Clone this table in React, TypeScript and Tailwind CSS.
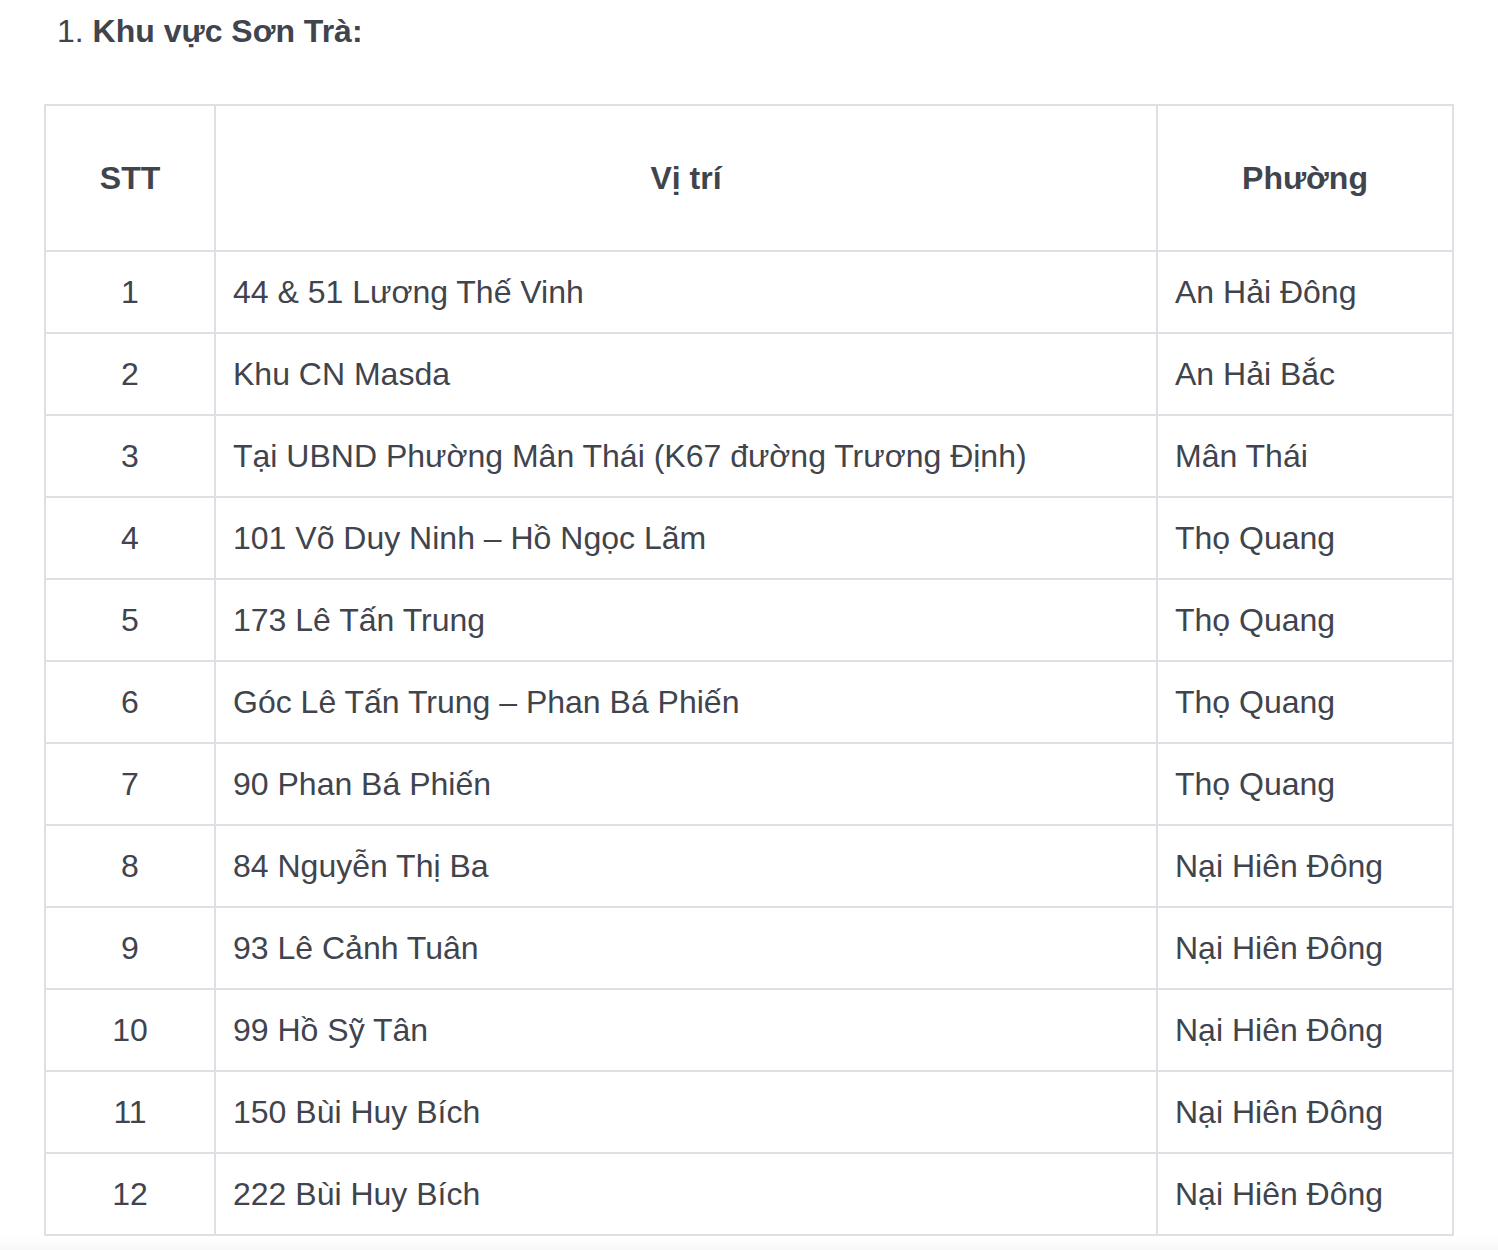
const rows: [string, string, string][] = [
  ['1', '44 & 51 Lương Thế Vinh', 'An Hải Đông'],
  ['2', 'Khu CN Masda', 'An Hải Bắc'],
  ['3', 'Tại UBND Phường Mân Thái (K67 đường Trương Định)', 'Mân Thái'],
  ['4', '101 Võ Duy Ninh – Hồ Ngọc Lãm', 'Thọ Quang'],
  ['5', '173 Lê Tấn Trung', 'Thọ Quang'],
  ['6', 'Góc Lê Tấn Trung – Phan Bá Phiến', 'Thọ Quang'],
  ['7', '90 Phan Bá Phiến', 'Thọ Quang'],
  ['8', '84 Nguyễn Thị Ba', 'Nại Hiên Đông'],
  ['9', '93 Lê Cảnh Tuân', 'Nại Hiên Đông'],
  ['10', '99 Hồ Sỹ Tân', 'Nại Hiên Đông'],
  ['11', '150 Bùi Huy Bích', 'Nại Hiên Đông'],
  ['12', '222 Bùi Huy Bích', 'Nại Hiên Đông'],
]

export default function App() {
  return (
    <div className="min-h-[1250px] bg-white text-[#3f444d] font-['Liberation_Sans',Arial,sans-serif]">
      <div className="pl-[57px] pt-[13px] text-[32px] leading-[36px]">
        1. <span className="font-bold">Khu vực Sơn Trà:</span>
      </div>

      <div className="pl-[44px] pr-[44px] pt-[55px]">
        <table className="w-full border-collapse text-[32px] bg-white">
          <thead>
            <tr className="h-[146px]">
              <th className="w-[170px] border-2 border-[#dde1e6] text-center font-bold">STT</th>
              <th className="border-2 border-[#dde1e6] text-center font-bold">Vị trí</th>
              <th className="w-[296px] border-2 border-[#dde1e6] text-center font-bold">Phường</th>
            </tr>
          </thead>
          <tbody>
            {rows.map(r => (
              <tr key={r[0]} className="h-[82px]">
                <td className="border-2 border-[#dde1e6] text-center">{r[0]}</td>
                <td className="border-2 border-[#dde1e6] px-[17px]">{r[1]}</td>
                <td className="border-2 border-[#dde1e6] px-[17px]">{r[2]}</td>
              </tr>
            ))}
          </tbody>
        </table>
      </div>
      <div className="h-[20px] bg-gradient-to-b from-white to-[#f4f5f6]" />
    </div>
  )
}
